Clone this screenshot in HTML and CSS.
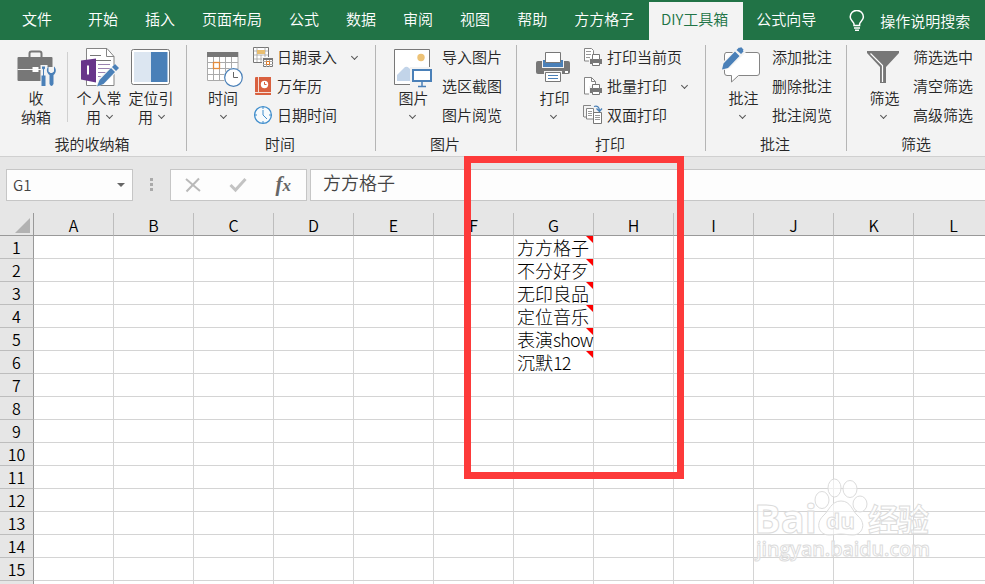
FILE: index.html
```html
<!DOCTYPE html>
<html lang="zh-CN">
<head>
  <meta charset="UTF-8">
  <title>DIY工具箱</title>
  <meta name="viewport" content="width=device-width, initial-scale=1">
  <link rel="stylesheet" href="styles.css">
</head>
<body>

  <!-- 选项卡 -->
  <nav class="tabs">
    <span class="tab file">文件</span>
    <span class="tab">开始</span>
    <span class="tab">插入</span>
    <span class="tab">页面布局</span>
    <span class="tab">公式</span>
    <span class="tab">数据</span>
    <span class="tab">审阅</span>
    <span class="tab">视图</span>
    <span class="tab">帮助</span>
    <span class="tab">方方格子</span>
    <span class="tab active">DIY工具箱</span>
    <span class="tab">公式向导</span>
    <span class="search">
      <svg width="16" height="22" viewBox="0 0 16 22" fill="none" stroke="#fff" stroke-width="1.5">
        <path d="M5 15.500V14C5 12 1.200 10.500 1.200 7a6.500 6.500 0 0 1 13.200 0c0 3.500-3.800 5-3.800 7v1.500z"/>
        <path d="M5 18h6M6 20.300h4"/>
      </svg>
      操作说明搜索
    </span>
  </nav>

  <!-- 功能区 -->
  <div class="ribbon">
    <section class="group first">
      <div class="tools">
        <div class="big box-btn">
          <svg width="42" height="45" viewBox="-1.500 -2 42 45">
            <path d="M13 13.500V8.500q0-2 2-2h8q2 0 2 2v5" fill="none" stroke="#777" stroke-width="2"/>
            <path d="M2 12h33q1 0 1 1v22q0 1-1 1H2q-1 0-1-1V13q0-1 1-1z" fill="#777"/>
            <path d="M1 24.500h35" stroke="#f3f3f3"/>
            <path d="M16 22h6v5h-6z" fill="#fff"/>
            <path d="M24 20h7v22h-7zM31 22h8v15h-2v5h-6z" fill="#f3f3f3"/>
            <path d="M25.500 21.500h3v2l-1 1v6h1.500V41h-4V30.500h1.500v-6l-1-1z" fill="#4a80b8"/>
            <path d="M32 21.500v5l2 1.500h1.500l2-1.500v-5c2.500 2 2.500 6.500-.5 8.500V39q-2 4-4 0v-9c-3-2-3.500-6.500-1-8.500z" fill="#4a80b8"/>
          </svg>
          <span>收</span><span>纳箱</span>
        </div>
        <i class="split"></i>
        <div class="big">
          <svg width="42" height="45" viewBox="0 0 42 45">
            <path d="M8.500 5.500H29l7 8v29H8.500z" fill="#fff" stroke="#858585"/>
            <path d="M28.500 5.500v8H36" fill="none" stroke="#858585"/>
            <path d="M12 12.500h11M12 17.500h21" stroke="#777"/>
            <path d="M20 21.500h12M20 25.500h12M20 29.500h10M20 33.500h8" stroke="#9a83b1"/>
            <path d="M3 17.500l15-2v24l-15-3z" fill="#68358a"/>
            <path d="M10 22.500v9" stroke="#fff" stroke-width="2"/>
            <path d="M18 44l3-9 16-14 5 5-16 15z" fill="#f3f3f3"/>
            <path d="M19 43.500l2.500-6.500L33 25l4 4-11.500 12zM34 24l3-3 4 4-3 3z" fill="#4a80b8"/>
          </svg>
          <span>个人常</span><span class="more">用<b class="chev"></b></span>
        </div>
        <div class="big">
          <svg width="42" height="45" viewBox="0 0 42 45">
            <rect x="1.500" y="6.500" width="38" height="35" rx="2" fill="#fff" stroke="#777"/>
            <path d="M4 9h17v30H4z" fill="#dce6f1"/>
            <path d="M21 9h16.500v30H21z" fill="#4a80b8"/>
          </svg>
          <span>定位引</span><span class="more">用<b class="chev"></b></span>
        </div>
      </div>
      <h2>我的收纳箱</h2>
    </section>

    <section class="group wide">
      <div class="tools">
        <div class="big">
          <svg width="42" height="45" viewBox="0 0 42 45">
            <path d="M5 9h31v29H5z" fill="#fff"/>
            <path d="M5.500 9v28.500H36V9M5.500 19.500H36M5.500 25.500H36M5.500 31.500H36M11.500 14v24M17.500 14v24M23.500 14v24M29.500 14v24" fill="none" stroke="#aaa"/>
            <path d="M5 9h31v5H5z" fill="#777"/>
            <rect x="11.500" y="19.500" width="6" height="6" fill="#fff" stroke="#e38b3c" stroke-width="1.300"/>
            <circle cx="31.500" cy="34.500" r="9.800" fill="#f3f3f3"/>
            <circle cx="31.500" cy="34.500" r="8.800" fill="#fff" stroke="#4a80b8" stroke-width="1.200"/>
            <path d="M31.500 29v5.500H36" fill="none" stroke="#666"/>
          </svg>
          <span>时间</span><b class="chev"></b>
        </div>
        <div class="list">
          <div class="item">
            <svg width="20" height="20" viewBox="0 0 20 20">
              <path d="M.500.500h15v15H.500z" fill="#fff" stroke="#777"/>
              <path d="M.500 4h15M.500 8h15M.500 12h15M4 0v15M8 8v7M12 0v15" stroke="#999" stroke-width=".7"/>
              <path d="M4 3h8v4H4z" fill="#e8be71"/>
              <path d="M9 10h11v10H9z" fill="#f3f3f3"/>
              <path d="M10.500 11.500h9v8h-9z" fill="#fff" stroke="#777"/>
              <path d="M13.500 12v8M16.500 12v8M10 14.500h10M10 17.500h10" stroke="#aaa"/>
              <path d="M10 11h10v2H10z" fill="#777"/><path d="M13.500 14.500h3v3h-3z" fill="#fff" stroke="#e07b28"/>
            </svg>
            日期录入<b class="chev"></b>
          </div>
          <div class="item">
            <svg width="20" height="20" viewBox="0 0 20 20">
              <path d="M3 1h15v18H3q-1 0-1-1V2q0-1 1-1z" fill="#d9603f"/>
              <path d="M5.500 1v16M2 16.500h16" stroke="#f6ddd5"/>
              <circle cx="11.500" cy="8.500" r="3.700" fill="#fff"/>
              <path d="M11.500 6v2.500h2" fill="none" stroke="#d9603f"/>
            </svg>
            万年历
          </div>
          <div class="item">
            <svg width="20" height="20" viewBox="0 0 20 20">
              <circle cx="10" cy="10" r="8.400" fill="#f7fafc" stroke="#3f8dcc" stroke-width="1.300"/>
              <path d="M10 5v5l4 4M10 2v2M10 16v2M2 10h2M16 10h2" fill="none" stroke="#3f8dcc"/>
            </svg>
            日期时间
          </div>
        </div>
      </div>
      <h2>时间</h2>
    </section>

    <section class="group shift">
      <div class="tools">
        <div class="big">
          <svg width="42" height="45" viewBox="0 0 42 45">
            <path d="M3.500 6.500h35v35h-35z" fill="#fff" stroke="#777"/>
            <circle cx="30" cy="14.500" r="3.700" fill="#edc276"/>
            <path d="M6 38v-6l8-8q2-1 4 1l6 6v7z" fill="#c2d4e9"/>
            <path d="M19 24h22v20H19z" fill="#f3f3f3"/>
            <path d="M22 27h18v11H22z" fill="#fff" stroke="#4a80b8" stroke-width="2"/>
            <path d="M31 39v4M27 43.500h8" stroke="#4a80b8" stroke-width="1.500"/>
          </svg>
          <span>图片</span><b class="chev"></b>
        </div>
        <div class="list">
          <div class="item">导入图片</div>
          <div class="item">选区截图</div>
          <div class="item">图片阅览</div>
        </div>
      </div>
      <h2>图片</h2>
    </section>

    <section class="group wide shift">
      <div class="tools">
        <div class="big">
          <svg width="42" height="45" viewBox="0 0 42 45">
            <path d="M6 18h30q2 0 2 2v9q0 2-2 2H6q-2 0-2-2v-9q0-2 2-2z" fill="#777"/>
            <path d="M10 16h22v9H10z" fill="#f3f3f3"/>
            <path d="M11 17h20v7H11z" fill="#4a80b8"/>
            <path d="M13.500 9.500h15v10h-15z" fill="#fff" stroke="#777"/>
            <path d="M12 28h18v3H12z" fill="#f3f3f3"/>
            <path d="M13.500 29.500h15v9h-15z" fill="#fff" stroke="#777"/>
            <path d="M16 32.500h10M16 35.500h10" stroke="#4a80b8"/>
            <path d="M33 28h3v2h-3z" fill="#fff"/>
          </svg>
          <span>打印</span><b class="chev"></b>
        </div>
        <div class="list">
          <div class="item">
            <svg width="20" height="20" viewBox="0 0 20 20">
              <path d="M1.500 1.500h7l2 2V14h-9z" fill="#fff" stroke="#858585"/>
              <path d="M3 4.500h5M3 7.500h5M3 10.500h4" stroke="#999"/>
              <path d="M6 11h14v7H6z" fill="#f3f3f3"/><path d="M7 12h12v5H7z" fill="#777"/>
              <path d="M9.500 7.500h7v5h-7zM9.500 15.500h7v3h-7z" fill="#fff" stroke="#777"/>
            </svg>
            打印当前页
          </div>
          <div class="item">
            <svg width="20" height="20" viewBox="0 0 20 20">
              <path d="M1.500 1.500h7l4 4V18h-11z" fill="#fff" stroke="#858585"/>
              <path d="M8.500 1.500v4h4" fill="none" stroke="#858585"/>
              <path d="M6 10h14v9H6z" fill="#f3f3f3"/><path d="M7 12h12v5H7z" fill="#777"/>
              <path d="M9.500 8.500h7v4h-7zM9.500 15.500h7v3h-7z" fill="#fff" stroke="#777"/>
            </svg>
            批量打印<b class="chev"></b>
          </div>
          <div class="item">
            <svg width="20" height="20" viewBox="0 0 20 20">
              <path d="M.500 12V.500H8M1 12h2" fill="none" stroke="#858585"/>
              <path d="M3.500 3.500h7V14h-7z" fill="#fff" stroke="#858585"/>
              <path d="M5 6.500h4M5 8.500h4M5 10.500h4" stroke="#999"/>
              <path d="M10.500 7.500h8v11h-8z" fill="#fff" stroke="#777"/>
              <path d="M12 10.500h5M12 12.500h5M12 14.500h5" stroke="#999"/>
              <path d="M11 1.500q5-1.500 5.500 4M13.500 3.500l3 3 2.500-3" fill="none" stroke="#4a80b8" stroke-width="1.300"/>
            </svg>
            双面打印
          </div>
        </div>
      </div>
      <h2>打印</h2>
    </section>

    <section class="group shift">
      <div class="tools">
        <div class="big">
          <svg width="42" height="45" viewBox="0 0 42 45">
            <path d="M5 9.500h31q2.500 0 2.500 2.500v18q0 2.500-2.500 2.500H17.500L10.500 39v-6.500H6q-2.500 0-2.500-2.500V12q0-2.500 2-2.500z" fill="#fff" stroke="#858585"/>
            <path d="M0 28l1-8L18 3l7 6L9 25z" fill="#f3f3f3"/>
            <path d="M1 26.500l1.500-6L14 8.500l4.500 4.500L7 25zM15.500 7l2.500-2.500 1 .500 1-1 2.500 2.500-.500 1 .500 1-2.500 2.500z" fill="#4a80b8"/>
          </svg>
          <span>批注</span><b class="chev"></b>
        </div>
        <div class="list">
          <div class="item">添加批注</div>
          <div class="item">删除批注</div>
          <div class="item">批注阅览</div>
        </div>
      </div>
      <h2>批注</h2>
    </section>

    <section class="group shift">
      <div class="tools">
        <div class="big">
          <svg width="42" height="45" viewBox="0 0 42 45">
            <path d="M5 8h32v2L24 24v16h-6V24L5 10z" fill="#777"/>
            <path d="M8.500 10.500L20.500 22.500V39" fill="none" stroke="#fff" stroke-width="1.200"/>
          </svg>
          <span>筛选</span><b class="chev"></b>
        </div>
        <div class="list">
          <div class="item">筛选选中</div>
          <div class="item">清空筛选</div>
          <div class="item">高级筛选</div>
        </div>
      </div>
      <h2>筛选</h2>
    </section>
  </div>

  <!-- 编辑栏 -->
  <div class="formula-bar">
    <div class="name-box">G1<i class="arrow"></i></div>
    <div class="dots"><i></i><i></i><i></i></div>
    <div class="fx-box">
      <svg width="16" height="16" viewBox="0 0 16 16"><path d="M1 2l14 12M14 1.500L1.500 14.500" stroke="#b9b9b9" stroke-width="2"/></svg>
      <svg width="18" height="16" viewBox="0 0 18 16"><path d="M1.500 8l5 5L16.500 2" fill="none" stroke="#c3c3c3" stroke-width="3"/></svg>
      <span class="fx">f<small>x</small></span>
    </div>
    <div class="formula">方方格子</div>
  </div>

  <!-- 工作表 -->
  <table class="sheet">
    <thead><tr id="cols"><th class="corner"><i></i></th></tr></thead>
    <tbody id="rows"></tbody>
  </table>

  <div class="mark"></div>

  <svg class="watermark" width="190" height="100" viewBox="0 0 190 100">
    <g fill="#fff" fill-opacity=".6" stroke="#dcdcdc">
      <ellipse cx="72" cy="30" rx="7" ry="8.500"/>
      <ellipse cx="84.500" cy="18" rx="6.500" ry="9"/>
      <ellipse cx="100" cy="19" rx="7" ry="8.500"/>
      <ellipse cx="110" cy="34" rx="7" ry="8"/>
      <path d="M91 31c10 0 11 10 17 15 9 8 4 19-5 19-5 0-8-1-12-1s-7 1-12 1c-10 0-14-11-6-19 6-5 8-15 18-15z"/>
      <text x="4" y="63" class="wm-big" textLength="63" lengthAdjust="spacingAndGlyphs">Bai</text>
      <text x="76" y="59" class="wm-du" textLength="29" lengthAdjust="spacingAndGlyphs">du</text>
      <text x="118" y="61" class="wm-cn" textLength="61">经验</text>
      <text x="6" y="86" class="wm-url" textLength="174" lengthAdjust="spacingAndGlyphs">jingyan.baidu.com</text>
    </g>
  </svg>

  <script>
    const letters = "ABCDEFGHIJKL".split("");
    // G列内容
    const names = ["方方格子", "不分好歹", "无印良品", "定位音乐", "表演<span>show</span>", "沉默<span>12</span>"];

    const cols = document.getElementById("cols");
    letters.forEach(l => {
      const th = document.createElement("th");
      th.textContent = l;
      cols.appendChild(th);
    });

    const rows = document.getElementById("rows");
    for (let r = 1; r <= 16; r++) {
      const tr = document.createElement("tr");
      const head = document.createElement("th");
      // 第16行只露出上边缘
      if (r < 16) head.textContent = r;
      tr.appendChild(head);
      letters.forEach(l => {
        const td = document.createElement("td");
        if (l === "G" && names[r - 1]) {
          td.innerHTML = names[r - 1];
          td.className = "note";
        }
        tr.appendChild(td);
      });
      rows.appendChild(tr);
    }
  </script>

</body>
</html>
```
FILE: styles.css
```css
* {
  box-sizing: border-box;
}
body {
  margin: 0;
  width: 985px;
  height: 584px;
  overflow: hidden;
  position: relative;
  background: #e6e6e6;
  color: #262626;
  font-family: "Noto Sans CJK SC", sans-serif;
  font-size: 15px;
  font-weight: 350;
}
svg {
  display: block;
  flex: none;
}

/* 选项卡 */
.tabs {
  display: flex;
  height: 40px;
  padding-top: 2px;
  background: #217346;
  color: #fff;
  white-space: nowrap;
}
.tab {
  padding: 0 13.5px;
  line-height: 34px;
}
.tab.file {
  padding: 0 22.5px 0 22px;
}
.tab.active {
  width: 94px;
  margin-left: 1px;
  padding: 0 2px 0 0;
  text-align: center;
  background: #f3f3f3;
  color: #217346;
}
.search {
  display: flex;
  align-items: center;
  gap: 15px;
  height: 36px;
  margin-left: 19.5px;
}
.search svg {
  margin-top: 2px;
}

/* 功能区 */
.ribbon {
  display: flex;
  height: 117px;
  padding-top: 3px;
  background: #f3f3f3;
  border-bottom: 1px solid #d0d0d0;
}
.group {
  position: relative;
  flex: none;
  width: 141px;
}
.group.wide {
  width: 189px;
}
.group.first {
  width: 187px;
}
.group::after {
  content: "";
  position: absolute;
  right: 0;
  top: 2px;
  width: 1px;
  height: 106px;
  background: #b5b5b5;
}
.group:last-child::after {
  display: none;
}
.tools {
  display: flex;
  gap: 5px;
  height: 87px;
  padding-left: 11px;
}
.first .tools {
  gap: 0;
  padding-left: 5px;
}
.group h2 {
  margin: 0;
  padding-right: 3px;
  font-size: 15px;
  font-weight: inherit;
  line-height: 28px;
  text-align: center;
}
.big {
  display: flex;
  flex-direction: column;
  align-items: center;
  width: 50px;
  line-height: 19px;
  white-space: nowrap;
}
.first .big {
  width: 52px;
}
.first .box-btn {
  width: 62px;
}
.shift .big span {
  padding-left: 3px;
}
.big .more {
  display: flex;
  align-items: center;
  gap: 6px;
}
.big > .chev {
  margin-top: 7px;
}
.split {
  width: 1px;
  height: 70px;
  margin: 9px 5px 0 0;
  background: #d0d0d0;
}
.list {
  line-height: 27px;
}
.item {
  display: flex;
  gap: 4px;
  height: 29px;
  white-space: nowrap;
}
.item svg {
  margin-top: 4px;
}
.item .chev {
  margin: 12px 0 0 11px;
}
.chev {
  width: 5px;
  height: 5px;
  border: solid #555;
  border-width: 0 1px 1px 0;
  transform: translateY(-1px) rotate(45deg);
}

/* 编辑栏 */
.formula-bar {
  display: flex;
  height: 56px;
  padding: 12px 0 0 6px;
  color: #444;
}
.name-box, .fx-box, .formula {
  display: flex;
  align-items: center;
  height: 32px;
  border: 1px solid #c6c6c6;
  background: #fdfdfd;
}
.name-box {
  justify-content: space-between;
  width: 127px;
  padding: 0 7px 2px 6px;
}
.arrow {
  margin-top: 2px;
  border: 4px solid transparent;
  border-top-color: #666;
  border-bottom: 0;
}
.dots {
  display: flex;
  flex-direction: column;
  gap: 2px;
  width: 37px;
  padding: 9px 0 0 17px;
}
.dots i {
  width: 3px;
  height: 3px;
  background: #aaa;
}
.fx-box {
  justify-content: space-between;
  width: 137px;
  margin-right: 3px;
  padding: 0 15px 0 14px;
}
.fx {
  font: italic bold 21px/24px "Liberation Serif", serif;
  color: #666;
}
.fx small {
  font-size: 17px;
}
.formula {
  flex: 1;
  padding: 0 0 6px 12px;
  border-right: 0;
  font-size: 18px;
}

/* 工作表 */
.sheet {
  width: 994px;
  table-layout: fixed;
  border-collapse: separate;
  border-spacing: 0;
  background: #fff;
  color: #000;
  font-size: 16px;
  font-weight: 300;
}
.sheet th, .sheet td {
  width: 80px;
  height: 23px;
  padding: 0;
  line-height: 22px;
  border-right: 1px solid #d4d4d4;
  border-bottom: 1px solid #d4d4d4;
}
.sheet th {
  background: #e6e6e6;
  font-weight: 350;
  border-color: #bdbdbd;
}
.sheet tbody th {
  padding-top: 1px;
  line-height: 21px;
}
.sheet thead th {
  padding-top: 2px;
  line-height: 20px;
  border-bottom-color: #999;
}
.sheet th:first-child {
  width: 34px;
  border-right-color: #999;
}
.corner i {
  display: block;
  width: 0;
  height: 0;
  margin: 0 0 0 15px;
  border-left: 15px solid transparent;
  border-bottom: 15px solid #b2b2b2;
}
.sheet .note {
  position: relative;
  padding-left: 3px;
  font-size: 18px;
  white-space: nowrap;
}
.note span {
  letter-spacing: -0.9px;
}
.note::after {
  content: "";
  position: absolute;
  top: 0;
  right: 0;
  border-top: 7px solid #f00;
  border-left: 7px solid transparent;
}

.mark {
  position: absolute;
  left: 464px;
  top: 156px;
  width: 220px;
  height: 323px;
  border: 7px solid #fd3a3a;
}

.watermark {
  position: absolute;
  left: 750px;
  top: 470px;
}
.wm-big, .wm-du, .wm-url {
  font-family: "Open Sans", sans-serif;
  font-weight: bold;
}
.wm-big {
  font-size: 39px;
}
.wm-du {
  font-size: 22px;
}
.wm-cn {
  font-size: 31px;
  font-weight: bold;
}
.wm-url {
  font-size: 20px;
  font-weight: 600;
}
```
